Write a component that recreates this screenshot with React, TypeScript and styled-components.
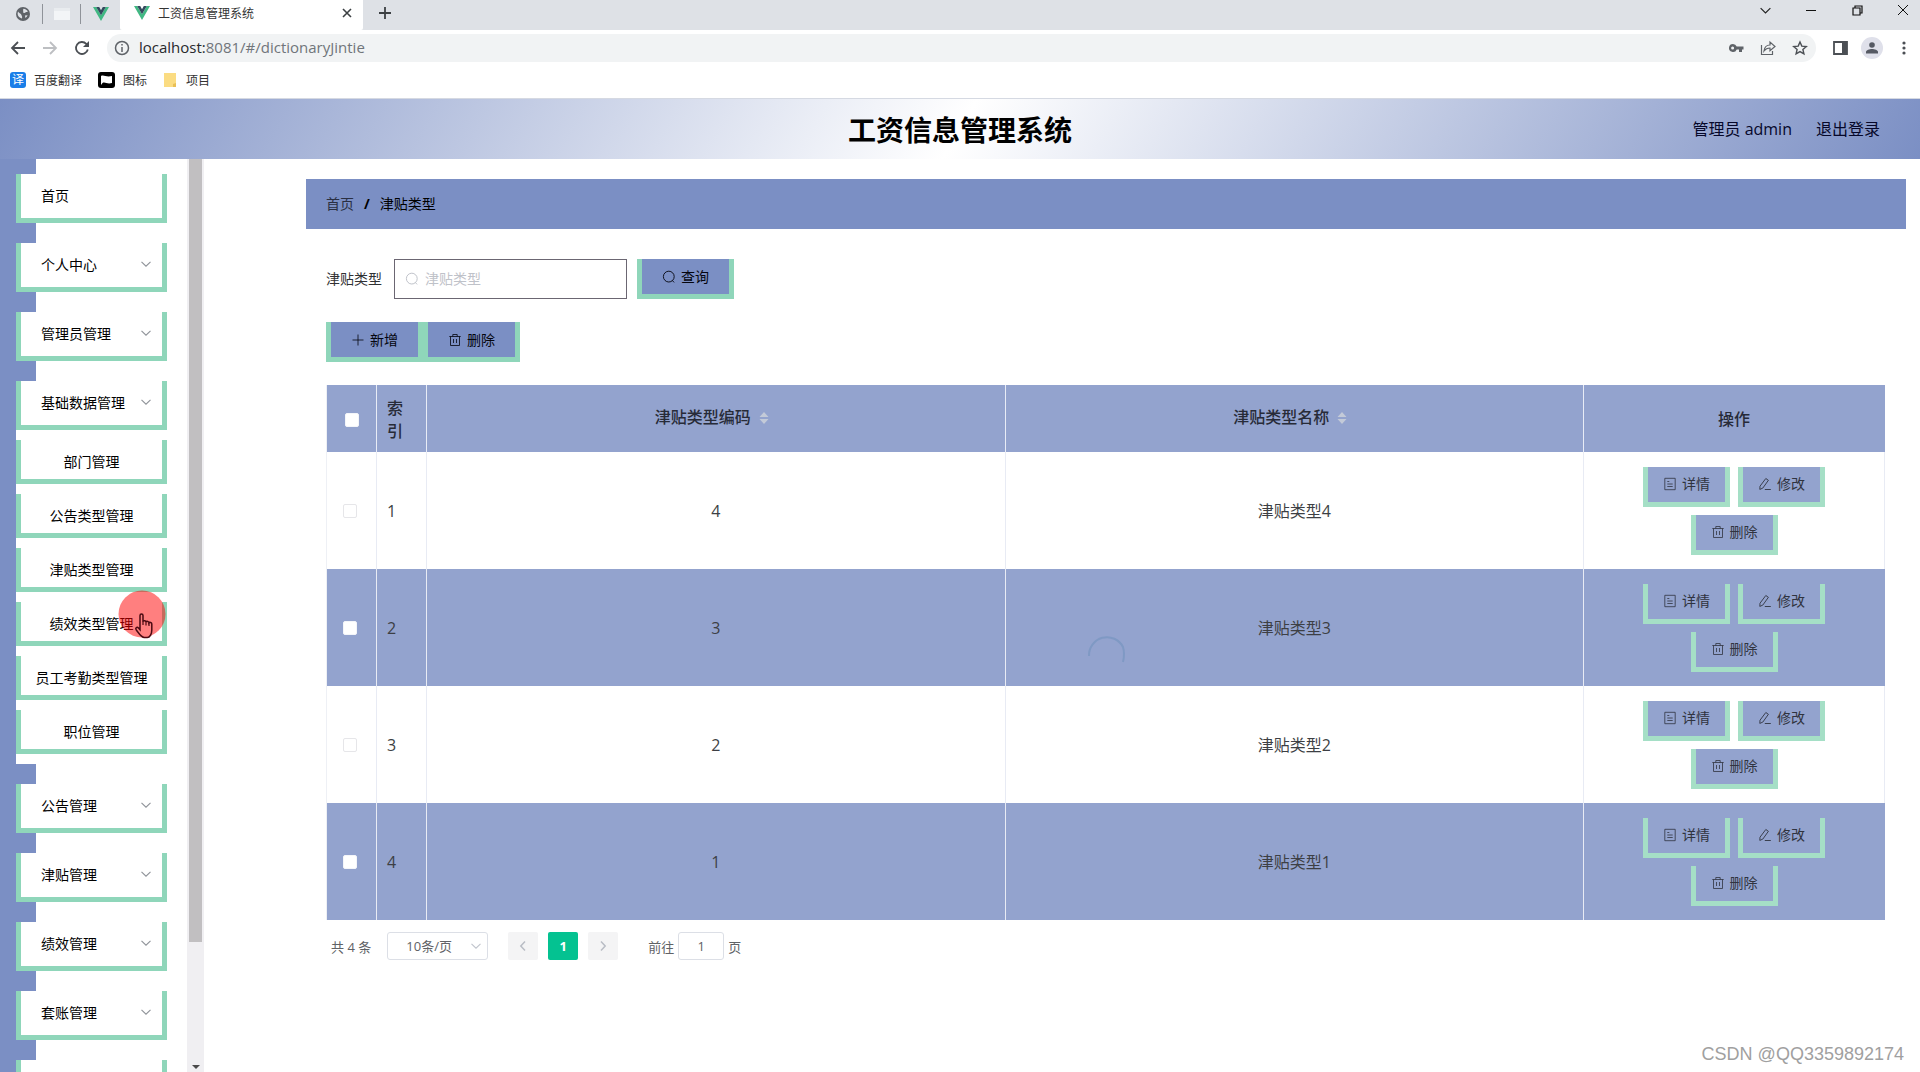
import React from "react";
import styled, { createGlobalStyle } from "styled-components";

const blue = "#7b8fc4";
const softBlue = "#93a3ce";
const green = "#8fd6ba";
const softGreen = "#a5dfc6";
const fontStack = '"Open Sans", "Noto Sans CJK SC", sans-serif';

const GlobalStyle = createGlobalStyle`
  * { box-sizing: border-box; }
  html, body, #root { height: 100%; }
  body {
    margin: 0;
    overflow: hidden;
    background: #fff;
    color: #000;
    font-family: ${fontStack};
    font-size: 14px;
  }
  button, input, select { font: inherit; color: inherit; margin: 0; }
  button { cursor: pointer; background: none; border: 0; padding: 0; }
  a { color: inherit; text-decoration: none; }
  svg { display: block; flex: none; }
`;

const Screen = styled.div`
  position: relative;
  display: flex;
  flex-direction: column;
  height: 100vh;
  overflow: hidden;
`;

/* ---------- browser frame ---------- */

const TabStrip = styled.div`
  display: flex;
  height: 30px;
  flex: none;
  background: #dee1e6;
`;

const PinnedTab = styled.button<{ $divided?: boolean }>`
  display: flex;
  align-items: center;
  justify-content: center;
  width: 40px;
  height: 20px;
  margin-top: 4px;
  border-right: ${(p) => (p.$divided ? "1px solid #8f9399" : "0")};
`;

const PinnedTabs = styled.div`
  display: flex;
  padding-left: 4px;
  width: 120px;
`;

const BlankFavicon = styled.span`
  width: 16px;
  height: 12px;
  background: #f3f5f7;
  border-top: 3px solid #e9ecef;
`;

const ActiveTab = styled.div`
  display: flex;
  align-items: center;
  gap: 8px;
  width: 243px;
  padding: 0 10px 4px 14px;
  background: #fff;
  border-radius: 0 0 2px 2px;
  font-size: 12px;
  color: #333;
`;

const TabTitle = styled.span`
  flex: 1;
`;

const NewTab = styled.button`
  display: flex;
  align-items: center;
  justify-content: center;
  width: 44px;
  height: 26px;
`;

const WindowControls = styled.div`
  display: flex;
  margin-left: auto;
`;

const WindowButton = styled.button`
  display: flex;
  align-items: center;
  justify-content: center;
  width: 46px;
  height: 20px;

  &:last-child { margin-right: -6px; }
`;

const Toolbar = styled.div`
  display: flex;
  align-items: center;
  height: 36px;
  flex: none;
  padding: 0 0 0 2px;
  background: #fff;
`;

const ToolButton = styled.button`
  display: flex;
  align-items: center;
  justify-content: center;
  width: 32px;
  height: 28px;
`;

const AddressBar = styled.div`
  display: flex;
  align-items: center;
  flex: 1;
  height: 28px;
  margin: 0 8px 0 9px;
  padding-left: 7px;
  border-radius: 14px;
  background: #f1f3f4;
`;

const Address = styled.span`
  flex: 1;
  padding: 0 0 2px 9px;
  font-size: 15px;
  line-height: 20px;
  color: #70757a;

  b { font-weight: 400; color: #27292c; }
`;

const Avatar = styled.span`
  display: flex;
  align-items: center;
  justify-content: center;
  width: 22px;
  height: 22px;
  border-radius: 50%;
  background: #dfe0ea;
`;

const Bookmarks = styled.div`
  display: flex;
  align-items: center;
  gap: 16px;
  height: 33px;
  flex: none;
  padding: 0 10px 4px;
  border-bottom: 1px solid #d5d9e2;
  background: #fff;
  font-size: 12px;
  color: #333;
`;

const Bookmark = styled.a`
  display: flex;
  align-items: center;
  gap: 8px;
`;

const TranslateIcon = styled.span`
  width: 16px;
  height: 16px;
  border-radius: 3px;
  background: #1a7ee8;
  color: #fff;
  font-size: 12px;
  line-height: 15px;
  text-align: center;
`;

/* ---------- page header ---------- */

const Header = styled.header`
  display: grid;
  grid-template-columns: 1fr auto 1fr;
  align-items: center;
  height: 60px;
  flex: none;
  padding: 0 40px;
  background: linear-gradient(120deg, ${blue}, #fff, ${blue});
`;

const Title = styled.h1`
  grid-column: 2;
  margin: 0;
  padding-top: 2px;
  font-size: 28px;
  line-height: 40px;
  font-weight: 700;
`;

const HeaderActions = styled.div`
  display: flex;
  justify-content: flex-end;
  gap: 24px;
  font-size: 16px;
  line-height: 24px;
  color: #06082a;
`;

/* ---------- sidebar ---------- */

const Body = styled.div`
  display: flex;
  flex: 1;
  min-height: 0;
`;

const Sidebar = styled.aside`
  display: flex;
  flex: none;
  width: 204px;
  border-left: 16px solid ${blue};
  overflow: hidden;
`;

const Menu = styled.nav`
  flex: 1;
  padding-top: 15px;
  background: linear-gradient(to right, ${blue} 20px, #fff 20px);
  overflow: hidden;
`;

const MenuItem = styled.button<{ $last?: boolean }>`
  display: flex;
  align-items: center;
  justify-content: space-between;
  width: 151px;
  height: 49px;
  margin-bottom: ${(p) => (p.$last ? "0" : "20px")};
  padding: 0 10px 2px 20px;
  border: solid ${green};
  border-width: 0 5px 5px;
  background: #fff;
`;

const SubMenu = styled.div`
  display: flex;
  flex-direction: column;
  gap: 10px;
  margin-bottom: 20px;
  padding: 10px 0;
  background: #fff;
`;

const SubItem = styled.a`
  width: 151px;
  height: 44px;
  border: solid ${green};
  border-width: 0 5px 5px;
  line-height: 44px;
  text-align: center;
  white-space: nowrap;
`;

const ScrollTrack = styled.div`
  display: flex;
  flex-direction: column;
  align-items: center;
  justify-content: space-between;
  width: 17px;
  padding-bottom: 2px;
  background: #f0eff2;
`;

const ScrollThumb = styled.div`
  width: 13px;
  height: 86%;
  background: #c1bfc1;
`;

/* ---------- content ---------- */

const Main = styled.main`
  flex: 1;
  min-width: 0;
  padding: 20px 14px 0 102px;
`;

const Breadcrumb = styled.nav`
  display: flex;
  align-items: center;
  gap: 10px;
  height: 50px;
  padding: 0 20px 2px;
  background: ${blue};

  a { color: #2a2f42; }
  b { font-weight: 700; }
`;

const Content = styled.section`
  padding: 30px 21px 0 20px;
`;

const SearchForm = styled.form`
  display: flex;
  align-items: center;
  gap: 10px;
  color: #303133;
`;

const FieldLabel = styled.label`
  padding-bottom: 2px;
`;

const SearchBox = styled.span`
  display: flex;
  align-items: center;
  gap: 6px;
  width: 233px;
  height: 40px;
  margin-left: 2px;
  padding: 0 10px;
  border: 1px solid #6b6672;
  color: #b9bcc4;
`;

const SearchInput = styled.input`
  flex: 1;
  min-width: 0;
  height: 30px;
  padding: 0 0 2px;
  border: 0;
  outline: 0;
  color: #303133;

  &::placeholder { color: #bfc2c9; }
`;

const ActionButton = styled.button<{ $soft?: boolean }>`
  display: flex;
  align-items: center;
  gap: 5px;
  height: 40px;
  padding: 0 ${(p) => (p.$soft ? 15 : 20)}px;
  border: solid ${(p) => (p.$soft ? softGreen : green)};
  border-width: 0 5px 5px;
  background: ${(p) => (p.$soft ? softBlue : blue)};
  color: ${(p) => (p.$soft ? "#30343f" : "#05060f")};
  font-size: 14px;
  line-height: 20px;
`;

const ButtonRow = styled.div`
  display: flex;
  padding: 23px 0;
`;

const TableWrap = styled.div`
  position: relative;
`;

const Table = styled.table`
  width: 100%;
  table-layout: fixed;
  border-collapse: separate;
  border-spacing: 0;
  border-left: 1px solid #eef0f5;
  font-size: 16px;
  line-height: 23px;
  color: #3d3f44;
`;

const HeadCell = styled.th<{ $left?: boolean }>`
  height: 67px;
  padding: 2px 10px 0;
  border-right: 1px solid #e8ecf6;
  background: ${softBlue};
  color: #272b38;
  font-weight: 500;
  text-align: ${(p) => (p.$left ? "left" : "center")};

  &:last-child { border-right-color: ${softBlue}; }
`;

const SortLabel = styled.button`
  display: inline-flex;
  align-items: center;
  gap: 8px;
  padding: 0 8px 4px 0;
  font-weight: 500;
`;

const Row = styled.tr`
  background: #fff;

  &:nth-child(even) { background: ${softBlue}; }
`;

const Cell = styled.td<{ $left?: boolean }>`
  height: 117px;
  padding: 2px 10px 0;
  border-right: 1px solid #e8ebf4;
  text-align: ${(p) => (p.$left ? "left" : "center")};

  &:first-child { padding: 0 14px 0 10px; }
  &:last-child { padding-top: 0; }
  ${Row}:nth-child(even) &:last-child { border-right-color: ${softBlue}; }
`;

const Check = styled.input<{ $faint?: boolean }>`
  display: block;
  appearance: none;
  width: 14px;
  height: 14px;
  margin: 0 auto;
  border: 1px solid ${(p) => (p.$faint ? "#e6e6e9" : "#f3f5f9")};
  border-radius: 2px;
  background: #fff;
`;

const RowActions = styled.div`
  display: flex;
  flex-wrap: wrap;
  justify-content: center;
  row-gap: 8px;

  button { margin: 0 4px; }
`;

const Spinner = styled.svg`
  position: absolute;
  top: 50%;
  left: 50%;
  transform: translate(-50%, -50%);
`;

const Pagination = styled.div`
  display: flex;
  align-items: center;
  padding: 12px 5px 0;
  font-size: 13px;
  color: #606266;
`;

const PageSize = styled.span`
  display: flex;
  align-items: center;
  width: 101px;
  height: 28px;
  margin: 0 20px 0 16px;
  padding-right: 5px;
  border: 1px solid #dcdfe6;
  border-radius: 3px;
  color: #c0c4cc;
`;

const PageSelect = styled.select`
  appearance: none;
  flex: 1;
  min-width: 0;
  padding: 0;
  border: 0;
  outline: 0;
  background: transparent;
  color: #606266;
  text-align: center;
  text-align-last: center;
`;

const PageButton = styled.button<{ $active?: boolean }>`
  display: flex;
  align-items: center;
  justify-content: center;
  width: 30px;
  height: 28px;
  margin-right: 10px;
  border-radius: 2px;
  background: ${(p) => (p.$active ? "#04c291" : "#f4f4f5")};
  color: ${(p) => (p.$active ? "#fff" : "#b9bdc5")};
  font-weight: 700;
`;

const Jumper = styled.label`
  display: flex;
  align-items: center;
  gap: 4px;
  margin-left: 20px;
`;

const JumpInput = styled.input`
  width: 46px;
  height: 28px;
  padding: 0;
  border: 1px solid #dcdfe6;
  border-radius: 3px;
  text-align: center;
`;

/* ---------- overlays ---------- */

const Pointer = styled.div`
  position: absolute;
  left: 118px;
  top: 590px;
  width: 48px;
  height: 48px;
  border-radius: 50%;
  pointer-events: none;
`;

const Watermark = styled.div`
  position: absolute;
  right: 16px;
  bottom: 7px;
  font-family: "Liberation Sans", sans-serif;
  font-size: 18px;
  line-height: 22px;
  color: #a0a0a0;
`;

/* ---------- icons ---------- */

const VueLogo = () => (
  <svg width="16" height="14" viewBox="0 0 16 14">
    <path d="M0 0h3.2L8 8.3 12.8 0H16L8 14z" fill="#41b883" />
    <path d="M3.2 0h3L8 3.2 9.8 0h3L8 8.3z" fill="#34495e" />
  </svg>
);

const Globe = () => (
  <svg width="16" height="16" viewBox="0 0 16 16">
    <circle cx="8" cy="8" r="7" fill="#5f6368" />
    <path d="M3 5.500c1 2 2.600 1.500 3.200 3 .5 1.500 1.300 1.500.8 4C4.500 12 2.500 10.300 2.600 7.600zM8.500 2.800c2 .2 3.600 1.200 4.400 2.800-.9.800-1.800-.2-2.400.9-.8.9-2.300.5-2.400-.6.700-1-.7-1.800.4-3.100zM10 9.500l2.600-.3c-.4 1.200-1.200 2.100-2.200 2.700z" fill="#dee1e6" />
  </svg>
);

const ChevronDown = ({ size = 12, color = "currentColor" }: { size?: number; color?: string }) => (
  <svg width={size} height={size} viewBox="0 0 12 12" fill="none" stroke={color} strokeWidth="1.1">
    <path d="M1.500 3.800L6 8.200l4.500-4.400" />
  </svg>
);

const SearchIcon = () => (
  <svg width="14" height="14" viewBox="0 0 14 14" fill="none" stroke="currentColor" strokeWidth="0.9">
    <circle cx="6.800" cy="6.600" r="5.400" />
    <path d="M10.300 10.500l1.800 1.900" />
  </svg>
);

const PlusIcon = () => (
  <svg width="14" height="14" viewBox="0 0 14 14" fill="none" stroke="currentColor" strokeWidth="0.8">
    <path d="M7 1.500v11M1.500 7h11" />
  </svg>
);

const TrashIcon = () => (
  <svg width="14" height="14" viewBox="0 0 14 14" fill="none" stroke="currentColor" strokeWidth="0.8">
    <path d="M1.300 3.500h11.400M2.500 3.500v9h9v-9M4.800 3.500V1.500h4.400v2M5.500 6v4M8.500 6v4" />
  </svg>
);

const DocumentIcon = () => (
  <svg width="14" height="14" viewBox="0 0 14 14" fill="none" stroke="currentColor" strokeWidth="0.8">
    <path d="M1.800 1.300h10.400v11.400H1.800zM4.300 4.500h2M4.300 7h5.400M4.300 9.500h5.400" />
  </svg>
);

const EditIcon = () => (
  <svg width="14" height="14" viewBox="0 0 14 14" fill="none" stroke="currentColor" strokeWidth="0.9">
    <path d="M7.800 1.500l2.600 1.800-5.600 7.800-3 1.300.2-3.200zM6.800 12.500h6" />
  </svg>
);

const SortIcon = () => (
  <svg width="10" height="14" viewBox="0 0 10 14" fill="#c3cad8">
    <path d="M5 1l4.500 5h-9zM5 13L.5 8h9z" />
  </svg>
);

/* ---------- data ---------- */

const basicItems = ["部门管理", "公告类型管理", "津贴类型管理", "绩效类型管理", "员工考勤类型管理", "职位管理"];

const rows = [
  { id: 1, code: "4", name: "津贴类型4" },
  { id: 2, code: "3", name: "津贴类型3" },
  { id: 3, code: "2", name: "津贴类型2" },
  { id: 4, code: "1", name: "津贴类型1" },
];

function MenuGroup({ label, open }: { label: string; open?: boolean }) {
  return (
    <MenuItem type="button" $last={open}>
      {label}
      <ChevronDown color="#8f9399" />
    </MenuItem>
  );
}

function BrowserFrame() {
  return (
    <>
      <TabStrip>
        <PinnedTabs>
          <PinnedTab $divided aria-label="网页"><Globe /></PinnedTab>
          <PinnedTab $divided aria-label="空白页"><BlankFavicon /></PinnedTab>
          <PinnedTab aria-label="Vue"><VueLogo /></PinnedTab>
        </PinnedTabs>
        <ActiveTab>
          <VueLogo />
          <TabTitle>工资信息管理系统</TabTitle>
          <button type="button" aria-label="关闭标签页">
            <svg width="12" height="12" viewBox="0 0 12 12" stroke="#3c4043" strokeWidth="1.6">
              <path d="M2 2l8 8M10 2l-8 8" />
            </svg>
          </button>
        </ActiveTab>
        <NewTab aria-label="新标签页">
          <svg width="14" height="14" viewBox="0 0 14 14" stroke="#3c4043" strokeWidth="1.800">
            <path d="M7 1v12M1 7h12" />
          </svg>
        </NewTab>
        <WindowControls>
          <WindowButton aria-label="搜索标签页"><ChevronDown size={13} color="#222" /></WindowButton>
          <WindowButton aria-label="最小化">
            <svg width="10" height="10" viewBox="0 0 10 10" stroke="#111"><path d="M0 5.500h10" /></svg>
          </WindowButton>
          <WindowButton aria-label="还原">
            <svg width="11" height="11" viewBox="0 0 11 11" fill="none" stroke="#111" strokeWidth="1.200">
              <path d="M1 3h7v7H1zM3 3V1h7v7H8" />
            </svg>
          </WindowButton>
          <WindowButton aria-label="关闭">
            <svg width="12" height="12" viewBox="0 0 12 12" stroke="#111"><path d="M1 1l10 10M11 1L1 11" /></svg>
          </WindowButton>
        </WindowControls>
      </TabStrip>
      <Toolbar>
        <ToolButton aria-label="后退">
          <svg width="16" height="16" viewBox="0 0 16 16" fill="none" stroke="#4b4f54" strokeWidth="1.800"><path d="M15 8H2.500M8 2L2 8l6 6" /></svg>
        </ToolButton>
        <ToolButton aria-label="前进">
          <svg width="16" height="16" viewBox="0 0 16 16" fill="none" stroke="#bdbfc2" strokeWidth="1.800"><path d="M1 8h12.500M8 2l6 6-6 6" /></svg>
        </ToolButton>
        <ToolButton aria-label="重新加载">
          <svg width="16" height="16" viewBox="0 0 16 16" fill="none" stroke="#4b4f54" strokeWidth="1.800">
            <path d="M13.800 9.500A6 6 0 1 1 12.300 3.800L14 5.500" /><path d="M15 1v6H9z" fill="#4b4f54" stroke="none" />
          </svg>
        </ToolButton>
        <AddressBar>
          <svg width="16" height="16" viewBox="0 0 16 16" fill="none" stroke="#5f6368" strokeWidth="1.500">
            <circle cx="8" cy="8" r="6.500" /><path d="M8 7v5M8 4v1.600" />
          </svg>
          <Address><b>localhost:</b>8081/#/dictionaryJintie</Address>
          <ToolButton aria-label="密码">
            <svg width="16" height="16" viewBox="0 0 16 16" fill="#5f6368">
              <path fillRule="evenodd" d="M5 4a4 4 0 1 0 3.700 5.500H11V12h3V9.500h1.500v-3H8.700A4 4 0 0 0 5 4zm-.4 2.500a1.500 1.500 0 1 1 0 3 1.500 1.500 0 0 1 0-3z" />
            </svg>
          </ToolButton>
          <ToolButton aria-label="分享">
            <svg width="16" height="16" viewBox="0 0 16 16" fill="none" stroke="#5f6368" strokeWidth="1.200">
              <path d="M1.500 5v9.500h11V11M4 11c.5-4 3-6 6-6V2l5 4.500-5 4.300V8C7.500 8 5.500 9 4 11z" />
            </svg>
          </ToolButton>
          <ToolButton aria-label="收藏">
            <svg width="16" height="16" viewBox="0 0 16 16" fill="none" stroke="#4b4f54" strokeWidth="1.400">
              <path d="M8 2l1.800 4.100 4.500.4-3.400 3 1 4.400L8 11.600l-3.900 2.300 1-4.400-3.400-3 4.500-.4z" />
            </svg>
          </ToolButton>
        </AddressBar>
        <ToolButton aria-label="侧边栏">
          <svg width="15" height="14" viewBox="0 0 15 14"><path d="M1 1h13v12H1z" fill="none" stroke="#4b4f54" strokeWidth="1.800" /><path d="M9 1h5v12H9z" fill="#4b4f54" /></svg>
        </ToolButton>
        <ToolButton aria-label="用户">
          <Avatar>
            <svg width="14" height="14" viewBox="0 0 14 14" fill="#555963"><circle cx="7" cy="4" r="2.800" /><path d="M1 12.500V11c0-2 3.500-3 6-3s6 1 6 3v1.500z" /></svg>
          </Avatar>
        </ToolButton>
        <ToolButton aria-label="更多">
          <svg width="4" height="14" viewBox="0 0 4 14" fill="#4b4f54"><circle cx="2" cy="2" r="1.600" /><circle cx="2" cy="7" r="1.600" /><circle cx="2" cy="12" r="1.600" /></svg>
        </ToolButton>
      </Toolbar>
      <Bookmarks>
        <Bookmark href="#"><TranslateIcon>译</TranslateIcon>百度翻译</Bookmark>
        <Bookmark href="#">
          <svg width="17" height="16" viewBox="0 0 17 16"><rect width="17" height="16" rx="3" /><path d="M3 4c3-1.500 5 1.500 11 0v7c-5 1.500-7-1.500-9.500 0L3 13z" fill="#fff" /></svg>
          图标
        </Bookmark>
        <Bookmark href="#">
          <svg width="15" height="14" viewBox="0 0 15 14"><path d="M1 0h12v14H1z" fill="#fbdc82" /><path d="M10 11l3-1v4h-3z" fill="#e9bf55" /></svg>
          项目
        </Bookmark>
      </Bookmarks>
    </>
  );
}

export default function App() {
  return (
    <Screen>
      <GlobalStyle />
      <BrowserFrame />
      <Header>
        <Title>工资信息管理系统</Title>
        <HeaderActions>
          <span>管理员 admin</span>
          <a href="#">退出登录</a>
        </HeaderActions>
      </Header>
      <Body>
        <Sidebar>
          <Menu>
            <MenuItem type="button">首页</MenuItem>
            <MenuGroup label="个人中心" />
            <MenuGroup label="管理员管理" />
            <MenuGroup label="基础数据管理" open />
            <SubMenu>
              {basicItems.map((label) => (
                <SubItem href="#" key={label}>{label}</SubItem>
              ))}
            </SubMenu>
            <MenuGroup label="公告管理" />
            <MenuGroup label="津贴管理" />
            <MenuGroup label="绩效管理" />
            <MenuGroup label="套账管理" />
            <MenuItem type="button" aria-label="更多菜单" />
          </Menu>
          <ScrollTrack>
            <ScrollThumb />
            <svg width="8" height="6" viewBox="0 0 8 6" fill="#4a4a4a"><path d="M0 1h8L4 5z" /></svg>
          </ScrollTrack>
        </Sidebar>
        <Main>
          <Breadcrumb>
            <a href="#">首页</a>
            <b>/</b>
            <span>津贴类型</span>
          </Breadcrumb>
          <Content>
            <SearchForm onSubmit={(e) => e.preventDefault()}>
              <FieldLabel htmlFor="type-name">津贴类型</FieldLabel>
              <SearchBox>
                <SearchIcon />
                <SearchInput id="type-name" placeholder="津贴类型" />
              </SearchBox>
              <ActionButton type="submit"><SearchIcon />查询</ActionButton>
            </SearchForm>
            <ButtonRow>
              <ActionButton type="button"><PlusIcon />新增</ActionButton>
              <ActionButton type="button"><TrashIcon />删除</ActionButton>
            </ButtonRow>
            <TableWrap>
              <Table>
                <colgroup>
                  <col width="50" />
                  <col width="50" />
                  <col />
                  <col />
                  <col width="301" />
                </colgroup>
                <thead>
                  <tr>
                    <HeadCell><Check type="checkbox" aria-label="全选" /></HeadCell>
                    <HeadCell $left>索<br />引</HeadCell>
                    <HeadCell><SortLabel type="button">津贴类型编码<SortIcon /></SortLabel></HeadCell>
                    <HeadCell><SortLabel type="button">津贴类型名称<SortIcon /></SortLabel></HeadCell>
                    <HeadCell>操作</HeadCell>
                  </tr>
                </thead>
                <tbody>
                  {rows.map((row) => (
                    <Row key={row.id}>
                      <Cell><Check type="checkbox" aria-label={row.name} $faint={row.id % 2 === 1} /></Cell>
                      <Cell $left>{row.id}</Cell>
                      <Cell>{row.code}</Cell>
                      <Cell>{row.name}</Cell>
                      <Cell>
                        <RowActions>
                          <ActionButton type="button" $soft><DocumentIcon />详情</ActionButton>
                          <ActionButton type="button" $soft><EditIcon />修改</ActionButton>
                          <ActionButton type="button" $soft><TrashIcon />删除</ActionButton>
                        </RowActions>
                      </Cell>
                    </Row>
                  ))}
                </tbody>
              </Table>
              <Spinner width="42" height="42" viewBox="0 0 42 42" fill="none" stroke="#7f99c4" strokeWidth="2">
                <path d="M4 24A18 18 0 0 1 38 15Q40 22 38 30" />
              </Spinner>
            </TableWrap>
            <Pagination>
              <span>共 4 条</span>
              <PageSize>
                <PageSelect aria-label="每页条数" defaultValue="10">
                  <option value="10">10条/页</option>
                </PageSelect>
                <ChevronDown />
              </PageSize>
              <PageButton type="button" aria-label="上一页">
                <svg width="12" height="12" viewBox="0 0 12 12" fill="none" stroke="currentColor" strokeWidth="1.500"><path d="M8 1.500L3.800 6 8 10.500" /></svg>
              </PageButton>
              <PageButton type="button" $active>1</PageButton>
              <PageButton type="button" aria-label="下一页">
                <svg width="12" height="12" viewBox="0 0 12 12" fill="none" stroke="currentColor" strokeWidth="1.500"><path d="M4 1.500L8.200 6 4 10.500" /></svg>
              </PageButton>
              <Jumper>
                前往
                <JumpInput defaultValue="1" />
                页
              </Jumper>
            </Pagination>
          </Content>
        </Main>
      </Body>
      <Pointer>
        <svg width="48" height="52" viewBox="0 0 48 52">
          <circle cx="24" cy="24" r="23.500" fill="#ff0000" fillOpacity="0.500" />
          <path d="M22 25.500c0-2 3-2 3 0v6c.5-1 3-1 3 .5.500-1 3-.8 3 .7.500-.7 2.800-.4 2.800 1.300v6c0 4-2 7.500-4.500 7.500h-3c-3 0-5-3.500-8-7.500-1.500-2.200.8-3.500 2.200-2l1.500 1.700z" fill="#ff8080" stroke="#4a0a12" strokeWidth="1.500" />
          <path d="M25 31v4M28 32v3.500M31 33v3" stroke="#4a0a12" strokeWidth="1.200" />
        </svg>
      </Pointer>
      <Watermark>CSDN @QQ3359892174</Watermark>
    </Screen>
  );
}
